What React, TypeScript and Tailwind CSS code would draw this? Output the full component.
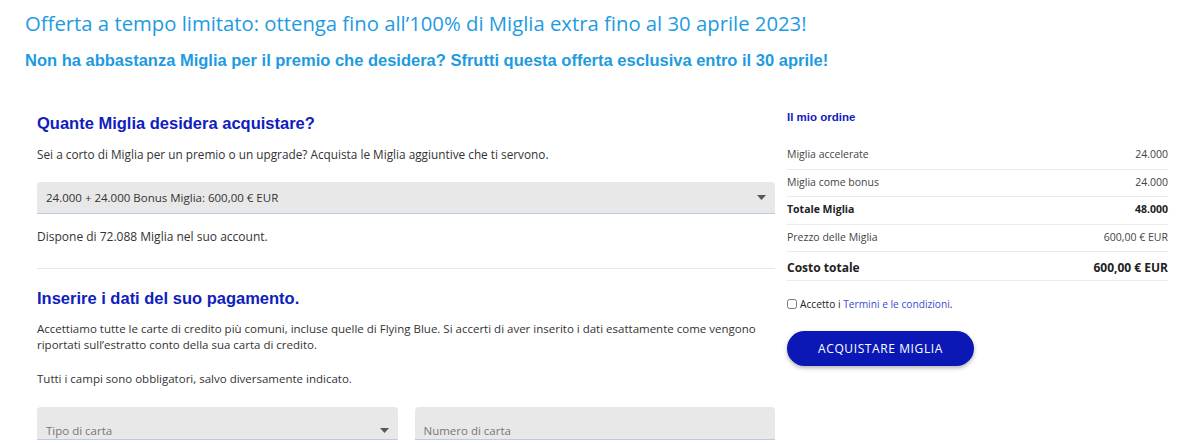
const sans = "font-['Open_Sans',sans-serif]"
const arial = "font-['Liberation_Sans',Arial,sans-serif]"

function Caret() {
  return (
    <svg width="9" height="5" viewBox="0 0 9 5" className="shrink-0">
      <path d="M0 0h9L4.5 5z" fill="#55565e" />
    </svg>
  )
}

const rows = [
  { label: 'Miglia accelerate', value: '24.000' },
  { label: 'Miglia come bonus', value: '24.000' },
  { label: 'Totale Miglia', value: '48.000', bold: true },
  { label: 'Prezzo delle Miglia', value: '600,00 € EUR' },
]

export default function App() {
  return (
    <div className={`${sans} bg-white w-[1200px] h-[443px] overflow-hidden text-[#333]`}>
      <div className="pl-[25px] pt-[10px]">
        <h1 className="text-[20.3px] leading-[26px] text-[#1e9be0]">
          Offerta a tempo limitato: ottenga fino all’100% di Miglia extra fino al 30 aprile 2023!
        </h1>
        <h2 className={`${arial} font-bold text-[16.5px] leading-[20px] mt-[14px] text-[#1e9be0]`}>
          Non ha abbastanza Miglia per il premio che desidera? Sfrutti questa offerta esclusiva entro il 30 aprile!
        </h2>
      </div>

      <div className="flex pl-[37px] mt-[42px] gap-3">
        {/* left column */}
        <div className="w-[738px]">
          <h3 className={`${arial} font-bold text-[16.5px] leading-[22px] text-[#1020be]`}>
            Quante Miglia desidera acquistare?
          </h3>
          <p className="text-[11.8px] leading-[17px] mt-[12px]">
            Sei a corto di Miglia per un premio o un upgrade? Acquista le Miglia aggiuntive che ti servono.
          </p>
          <div className="mt-[19px] h-8 bg-[#e8e8e8] rounded-t-[4px] border-b border-[#b9cbe6] flex items-center justify-between px-[9px]">
            <span className="text-[11.5px] text-[#333]">24.000 + 24.000 Bonus Miglia: 600,00 € EUR</span>
            <Caret />
          </div>
          <p className="text-[12px] leading-[17px] mt-[14px]">Dispone di 72.088 Miglia nel suo account.</p>
          <div className="border-t border-[#e6e8ec] mt-[23px]" />

          <h3 className={`${arial} font-bold text-[16.5px] leading-[22px] text-[#1020be] mt-[18px]`}>
            Inserire i dati del suo pagamento.
          </h3>
          <p className="text-[11.5px] leading-[16px] mt-[12px] whitespace-nowrap">
            Accettiamo tutte le carte di credito più comuni, incluse quelle di Flying Blue. Si accerti di aver inserito i dati esattamente come vengono
            <br />
            riportati sull’estratto conto della sua carta di credito.
          </p>
          <p className="text-[11.5px] leading-[16px] mt-[18px]">Tutti i campi sono obbligatori, salvo diversamente indicato.</p>
          <div className="flex gap-[17px] mt-[20px]">
            <div className="flex-1 h-[33px] bg-[#e8e8e8] rounded-t-[4px] border-b border-[#b9cbe6] flex items-end justify-between px-[9px]">
              <span className="text-[11.5px] leading-[16px] text-[#777]">Tipo di carta</span>
              <span className="mb-[6px]"><Caret /></span>
            </div>
            <div className="flex-1 h-[33px] bg-[#e8e8e8] rounded-t-[4px] border-b border-[#b9cbe6] flex items-end px-[9px]">
              <span className="text-[11.5px] leading-[16px] text-[#777]">Numero di carta</span>
            </div>
          </div>
        </div>

        {/* right column: order summary */}
        <div className="w-[381px]">
          <h4 className={`${arial} font-bold text-[11.5px] leading-[14px] text-[#1020be] mt-[-2px]`}>Il mio ordine</h4>
          <div className="mt-[18px]">
            {rows.map((r) => (
              <div
                key={r.label}
                className="flex justify-between items-center h-[27.5px] border-b border-[#ebebeb] text-[10.5px]"
              >
                <span className={r.bold ? 'font-bold text-[#222]' : 'text-[#444]'}>{r.label}</span>
                <span className={r.bold ? 'font-bold text-[#222]' : 'text-[#444]'}>{r.value}</span>
              </div>
            ))}
            <div className="flex justify-between items-center pt-[4px] h-[29px] border-b border-[#ebebeb] text-[12px] font-bold text-[#222]">
              <span>Costo totale</span>
              <span>600,00 € EUR</span>
            </div>
          </div>
          <label className="flex items-center gap-[3px] mt-[16px] text-[10.2px] leading-[14px] text-[#222]">
            <input type="checkbox" className="w-[10px] h-[10px] m-0" />
            <span>
              Accetto i <span className="text-[#3a4ad0]">Termini e le condizioni</span>.
            </span>
          </label>
          <button className="mt-[20px] w-[187px] h-[35px] rounded-full bg-[#0c18b6] text-white text-[12px] font-medium tracking-[0.6px] shadow-[0_2px_4px_rgba(0,0,0,0.3)]">
            ACQUISTARE MIGLIA
          </button>
        </div>
      </div>
    </div>
  )
}
